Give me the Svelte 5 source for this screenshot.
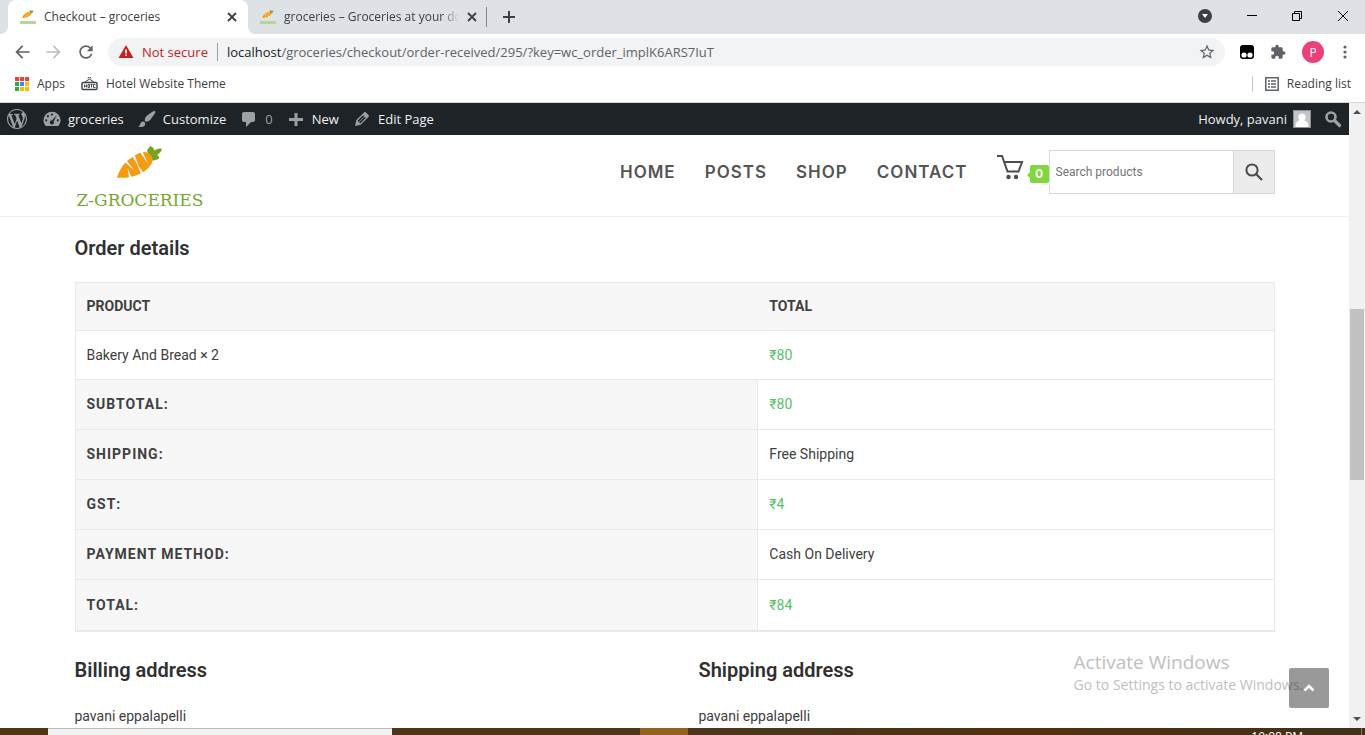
<script>
  const menu = ['Home', 'Posts', 'Shop', 'Contact'];
  const totals = [
    { label: 'Subtotal:', value: '₹80', price: true },
    { label: 'Shipping:', value: 'Free Shipping', price: false },
    { label: 'GST:', value: '₹4', price: true },
    { label: 'Payment method:', value: 'Cash On Delivery', price: false },
    { label: 'Total:', value: '₹84', price: true }
  ];
  const addresses = [
    { title: 'Billing address', name: 'pavani eppalapelli' },
    { title: 'Shipping address', name: 'pavani eppalapelli' }
  ];
  const dots = ['#ea4335', '#ea4335', '#ea4335', '#34a853', '#4285f4', '#fbbc05', '#34a853', '#fbbc05', '#fbbc05'];
</script>

{#snippet carrot(size)}
  <svg width={size} height={size * 0.72} viewBox="0 0 50 36" aria-hidden="true">
    <path fill="#74a51f" d="M34 8c-3-3-1-5 2-8 2 1 4 3 4 5 3-2 5-3 8-2-1 3-3 5-5 6 1 1 2 2 2 4-3 2-6 2-8 2z" />
    <path fill="#f39c12" d="M1 33C4 23 9 17 15 13 22 8 28 5 33 7c5 2 7 8 3 13-6 9-20 14-35 13z" />
    <path fill="#fff" d="M9 16.500l10 9-8-10.500zM17 11l7 11-4.500-12.500zM25 6.500l8 11.500-5.500-12.500zM14 34l-2-11 4.500 10.500zM26 29l-4-10 6.500 8.500z" />
  </svg>
{/snippet}

{#snippet favicon()}
  <span class="favicon" aria-hidden="true">{@render carrot(12)}<i></i></span>
{/snippet}

{#snippet cross()}
  <svg width="10" height="10" viewBox="0 0 10 10" aria-hidden="true"><path d="M1 1l8 8M9 1L1 9" stroke="#3c4043" stroke-width="1.8" /></svg>
{/snippet}

<div class="screen">
  <header class="browser">
    <div class="tabs">
      <div class="tab active">
        {@render favicon()}
        <span class="tab-title">Checkout – groceries</span>
        <button class="plain" aria-label="Close tab">{@render cross()}</button>
      </div>
      <div class="tab">
        {@render favicon()}
        <span class="tab-title fade">groceries – Groceries at your door</span>
        <button class="plain" aria-label="Close tab">{@render cross()}</button>
      </div>
      <button class="plain new-tab" aria-label="New tab">
        <svg width="12" height="12" viewBox="0 0 12 12"><path d="M6 0v12M0 6h12" stroke="#3c4043" stroke-width="2" /></svg>
      </button>
      <div class="window-buttons">
        <button class="plain" aria-label="Search tabs">
          <svg width="14" height="14" viewBox="0 0 14 14"><circle cx="7" cy="7" r="7" fill="#3c4043" /><path d="M4 5h6l-3 4z" fill="#fff" /></svg>
        </button>
        <button class="plain" aria-label="Minimize">
          <svg width="10" height="10" viewBox="0 0 10 10"><path d="M0 4.500h10" stroke="#000" /></svg>
        </button>
        <button class="plain" aria-label="Restore">
          <svg width="10" height="10" viewBox="0 0 10 10"><path d="M.5 2.500h7v7h-7zM2.500 2.500v-2h7v7h-2" fill="none" stroke="#000" /></svg>
        </button>
        <button class="plain" aria-label="Close">
          <svg width="12" height="12" viewBox="0 0 12 12"><path d="M1 1l10 10M11 1L1 11" stroke="#000" /></svg>
        </button>
      </div>
    </div>

    <div class="toolbar">
      <button class="plain" aria-label="Back">
        <svg width="20" height="20" viewBox="0 0 24 24"><path fill="#5f6368" d="M21 11H7.830l5.590-5.590L12 4l-8 8 8 8 1.410-1.410L7.830 13H21v-2z" /></svg>
      </button>
      <button class="plain" aria-label="Forward">
        <svg width="20" height="20" viewBox="0 0 24 24"><path fill="#babcbe" d="M3 11h13.170l-5.590-5.590L12 4l8 8-8 8-1.410-1.410L16.170 13H3v-2z" /></svg>
      </button>
      <button class="plain" aria-label="Reload">
        <svg width="20" height="20" viewBox="0 0 24 24"><path fill="#5f6368" d="M17.650 6.350C16.200 4.900 14.210 4 12 4c-4.420 0-7.990 3.580-7.990 8s3.570 8 7.990 8c3.730 0 6.840-2.550 7.730-6h-2.080c-.82 2.330-3.040 4-5.650 4-3.310 0-6-2.690-6-6s2.690-6 6-6c1.660 0 3.140.69 4.220 1.780L13 11h7V4l-2.350 2.350z" /></svg>
      </button>
      <form class="omnibox">
        <svg width="16" height="14" viewBox="0 0 16 14" aria-hidden="true"><path d="M8 0l7.500 13H.5z" fill="#c5221f" /><path d="M7.200 4.500h1.600v4H7.200zM7.200 9.500h1.600V11H7.200z" fill="#fff" /></svg>
        <span class="insecure">Not secure</span>
        <label for="address">localhost</label>
        <input id="address" value="/groceries/checkout/order-received/295/?key=wc_order_implK6ARS7IuT" />
        <button class="plain" type="button" aria-label="Bookmark this page">
          <svg width="18" height="18" viewBox="0 0 24 24"><path fill="#5f6368" d="M22 9.240l-7.190-.62L12 2 9.190 8.630 2 9.240l5.460 4.730L5.820 21 12 17.270 18.180 21l-1.630-7.030L22 9.240zM12 15.400l-3.760 2.270 1-4.280-3.320-2.880 4.380-.38L12 6.100l1.710 4.040 4.380.38-3.320 2.880 1 4.280L12 15.400z" /></svg>
        </button>
      </form>
      <div class="extensions">
        <button class="plain" aria-label="Extension">
          <svg width="14" height="14" viewBox="0 0 14 14"><rect width="14" height="14" rx="3" /><circle cx="4" cy="10" r="2.600" fill="#fff" /><circle cx="10" cy="10" r="2.600" fill="#fff" /></svg>
        </button>
        <button class="plain" aria-label="Extensions">
          <svg width="16" height="16" viewBox="0 0 24 24"><path fill="#5f6368" d="M20.500 11H19V7c0-1.100-.9-2-2-2h-4V3.500C13 2.120 11.880 1 10.500 1S8 2.120 8 3.500V5H4c-1.100 0-1.990.9-1.990 2v3.800H3.500c1.490 0 2.700 1.210 2.700 2.700s-1.210 2.700-2.700 2.700H2V20c0 1.100.9 2 2 2h3.800v-1.500c0-1.490 1.210-2.700 2.700-2.700 1.490 0 2.700 1.210 2.700 2.700V22H17c1.100 0 2-.9 2-2v-4h1.500c1.380 0 2.500-1.120 2.500-2.500S21.880 11 20.500 11z" /></svg>
        </button>
        <button class="plain profile">P</button>
        <button class="plain" aria-label="Menu">
          <svg width="4" height="14" viewBox="0 0 4 14" fill="#5f6368"><circle cx="2" cy="2" r="1.600" /><circle cx="2" cy="7" r="1.600" /><circle cx="2" cy="12" r="1.600" /></svg>
        </button>
      </div>
    </div>

    <nav class="bookmarks" aria-label="Bookmarks">
      <a href="#apps">
        <svg width="14" height="14" viewBox="0 0 14 14" aria-hidden="true">
          {#each dots as fill, i}
            <rect x={(i % 3) * 5} y={Math.floor(i / 3) * 5} width="4" height="4" {fill} />
          {/each}
        </svg>
        Apps
      </a>
      <a href="#hotel">
        <svg width="17" height="14" viewBox="0 0 17 14" fill="none" stroke="#3c4043" aria-hidden="true">
          <path d="M3.500 5.500l5-3.500 5 3.500M7 1.500a1.500 1.500 0 0 1 3 0" />
          <rect x="1" y="5.500" width="15" height="7" rx="1" stroke-width="1.400" />
          <path d="M3.500 7.500v3M5.500 7.500v3M3.500 9h2M7 7.500h1.500v3H7zM9.500 7.500h2M10.500 7.500v3M14.500 7.500h-2v3h2" stroke-width=".9" />
        </svg>
        Hotel Website Theme
      </a>
      <a class="reading" href="#reading">
        <svg width="14" height="14" viewBox="0 0 14 14" aria-hidden="true"><path d="M.8.8h12.400v12.400H.8z" fill="none" stroke="#5f6368" stroke-width="1.500" /><path d="M3 4h2M6 4h5M3 7h2M6 7h5M3 10h2M6 10h5" stroke="#5f6368" stroke-width="1.500" /></svg>
        Reading list
      </a>
    </nav>
  </header>

  <div class="viewport">
    <div class="page">
      <nav class="admin" aria-label="Site toolbar">
        <a class="wp" href="#wp" aria-label="WordPress">
          <svg width="20" height="20" viewBox="0 0 20 20"><path d="M20 10c0-5.510-4.490-10-10-10C4.480 0 0 4.490 0 10c0 5.520 4.480 10 10 10 5.510 0 10-4.480 10-10zM7.780 15.370L4.370 6.220c.55-.02 1.170-.08 1.170-.08.5-.06.44-1.130-.06-1.110 0 0-1.450.11-2.370.11-.18 0-.37 0-.58-.01C4.120 2.690 6.870 1.110 10 1.110c2.330 0 4.450.87 6.050 2.340-.68-.11-1.650.39-1.650 1.580 0 .74.45 1.360.9 2.100.35.61.55 1.360.55 2.460 0 1.490-1.400 5-1.400 5l-3.030-8.370c.54-.02.82-.17.82-.17.5-.05.44-1.250-.06-1.220 0 0-1.440.12-2.380.12-.87 0-2.330-.12-2.330-.12-.5-.03-.56 1.200-.06 1.220l.92.08 1.260 3.410zM17.410 10c.24-.64.74-1.870.43-4.250.7 1.290 1.050 2.710 1.050 4.250 0 3.290-1.730 6.240-4.400 7.780.97-2.590 1.940-5.200 2.920-7.780zM6.100 18.090C3.120 16.650 1.110 13.530 1.110 10c0-1.300.23-2.480.72-3.590C3.250 10.300 4.670 14.200 6.100 18.090zm4.030-6.630l2.580 6.980c-.86.29-1.760.45-2.710.45-.79 0-1.570-.11-2.290-.33.81-2.380 1.620-4.740 2.420-7.100z" /></svg>
        </a>
        <a href="#site">
          <svg width="20" height="20" viewBox="0 0 20 20"><path d="M3.800 17h12.400c1.400-1.600 2.300-3.500 2.300-5.800a8.500 8.500 0 0 0-17 0c0 2.300.9 4.200 2.300 5.800z" /><g fill="#1d2327"><circle cx="10" cy="5.500" r="1.100" /><circle cx="5.900" cy="7.200" r="1.100" /><circle cx="4.200" cy="11.300" r="1.100" /><circle cx="15.800" cy="11.300" r="1.100" /><path d="M14.800 6.200l-3.200 6.200a2 2 0 1 1-1.800-1z" /></g></svg>
          groceries
        </a>
        <a href="#customize">
          <svg width="20" height="20" viewBox="0 0 20 20"><path d="M18.330 3.570s.27-.8-.31-1.360c-.53-.52-1.220-.24-1.220-.24-.61.3-5.760 3.470-7.670 5.570-.86.96-2.060 3.790-1.090 4.820.92.98 3.960-.17 4.790-1 2.060-2.060 5.210-7.170 5.500-7.790zM1.400 17.650c2.370-1.560 1.460-3.410 3.230-4.640.93-.65 2.220-.62 3.080.29.63.67.8 2.570-.16 3.460-1.570 1.450-4 1.550-6.150.89z" /></svg>
          Customize
        </a>
        <a class="dim" href="#comments">
          <svg width="20" height="20" viewBox="0 0 20 20"><path d="M5 3h9c1.100 0 2 .9 2 2v6c0 1.100-.9 2-2 2h-2l-5 5v-5H5c-1.100 0-2-.9-2-2V5c0-1.100.9-2 2-2z" /></svg>
          0
        </a>
        <a href="#new">
          <svg width="20" height="20" viewBox="0 0 20 20"><path d="M8.500 4h3v5H17v3h-5.500v5h-3v-5H3V9h5.500z" /></svg>
          New
        </a>
        <a href="#edit">
          <svg width="20" height="20" viewBox="0 0 20 20"><path d="M13.890 3.390l2.710 2.720c.46.46.42 1.240.03 1.640l-8.010 8.020-5.560 1.160 1.160-5.580s7.600-7.630 7.990-8.030c.39-.39 1.220-.39 1.680.07zm-2.730 2.790l-5.590 5.610 1.110 1.110 5.540-5.650zm-2.970 8.230l5.580-5.600-1.070-1.080-5.590 5.600z" /></svg>
          Edit Page
        </a>
        <a class="howdy" href="#profile">
          Howdy, pavani
          <svg width="18" height="18" viewBox="0 0 18 18"><path fill="#8c8f94" d="M0 0h18v18H0z" /><path fill="#c3c4c7" d="M1 1h16v16H1z" /><path fill="#fff" d="M9 3.500a3.700 3.700 0 0 1 2.300 6.700C14 11 15.500 13 15.500 17h-13c0-4 1.500-6 4.200-6.800A3.700 3.700 0 0 1 9 3.500z" /></svg>
        </a>
        <a href="#find" aria-label="Search">
          <svg width="18" height="18" viewBox="0 0 18 18"><circle cx="7" cy="7" r="4.500" fill="none" stroke="#9ca1a6" stroke-width="2.600" /><path d="M10.500 10.500l5 5" stroke="#9ca1a6" stroke-width="3.200" stroke-linecap="round" /></svg>
        </a>
      </nav>

      <div class="site-header">
        <div class="container bar">
          <a class="logo" href="#home">
            {@render carrot(48)}
            <span>Z-GROCERIES</span>
          </a>
          <nav class="menu" aria-label="Main">
            {#each menu as item}
              <a href="#{item.toLowerCase()}">{item}</a>
            {/each}
          </nav>
          <a class="cart" href="#cart" aria-label="Cart">
            <svg width="27" height="27" viewBox="0 0 27 27" fill="none" stroke="#4c4c4c" stroke-width="2"><path d="M0 2h5l5.500 15.500h11L25 8H7" /><circle cx="11.500" cy="23" r="2.200" fill="#4c4c4c" stroke="none" /><circle cx="19" cy="23" r="2.200" fill="#4c4c4c" stroke="none" /></svg>
            <span class="badge">0</span>
          </a>
          <form class="search">
            <input type="search" placeholder="Search products" aria-label="Search products" />
            <button type="button" aria-label="Search">
              <svg width="18" height="18" viewBox="0 0 18 18" fill="none" stroke="#4c4c4c"><circle cx="7" cy="7" r="5.600" stroke-width="2" /><path d="M11 11l6 6" stroke-width="2.200" /></svg>
            </button>
          </form>
        </div>
      </div>

      <main class="container">
        <h2>Order details</h2>
        <table>
          <thead>
            <tr><th scope="col">Product</th><th scope="col">Total</th></tr>
          </thead>
          <tbody>
            <tr><td>Bakery And Bread × 2</td><td class="price">₹80</td></tr>
          </tbody>
          <tfoot>
            {#each totals as row}
              <tr><th scope="row">{row.label}</th><td class:price={row.price}>{row.value}</td></tr>
            {/each}
          </tfoot>
        </table>
        <div class="addresses">
          {#each addresses as a}
            <section>
              <h2>{a.title}</h2>
              <address>{a.name}</address>
            </section>
          {/each}
        </div>
      </main>

      <div class="watermark"><strong>Activate Windows</strong><span>Go to Settings to activate Windows.</span></div>
      <button class="to-top" aria-label="Back to top">
        <svg width="12" height="8" viewBox="0 0 12 8"><path d="M1.500 6.500L6 2l4.500 4.500" fill="none" stroke="#fff" stroke-width="2.600" /></svg>
      </button>
    </div>
    <div class="scrollbar" aria-hidden="true">
      <svg width="8" height="5" viewBox="0 0 8 5"><path d="M0 5l4-4 4 4z" fill="#505050" /></svg>
      <div class="track"><i></i></div>
      <svg width="8" height="5" viewBox="0 0 8 5"><path d="M0 0l4 4 4-4z" fill="#505050" /></svg>
    </div>
  </div>

  <footer class="taskbar">
    <div class="task-search"></div>
    <div class="task-app"></div>
    <time>10:08 PM</time>
    <div class="show-desktop"></div>
  </footer>
</div>

<style>
  :global(body) { margin: 0; }
  * { box-sizing: border-box; }
  a { color: inherit; text-decoration: none; }
  svg { display: block; flex: none; }
  .plain { display: flex; align-items: center; justify-content: center; padding: 0; border: 0; background: none; font: inherit; }
  .screen { display: flex; flex-direction: column; height: 100vh; overflow: hidden; background: #fff; color: #404040; font-family: Roboto, sans-serif; font-size: 14px; }

  .browser { flex: none; border-bottom: 1px solid #d5d7da; font-family: "Open Sans", "Noto Sans", sans-serif; font-size: 12px; color: #3c4043; }
  .tabs { display: flex; align-items: center; height: 34px; padding-left: 8px; background: #dee1e6; }
  .tab { position: relative; display: flex; align-items: center; gap: 8px; width: 240px; height: 34px; padding: 0 11px 0 12px; }
  .tab:not(.active)::after { content: ""; position: absolute; right: 1px; top: 7px; width: 1px; height: 20px; background: #85888c; }
  .tab.active { background: #fff; border-radius: 8px 8px 0 0; }
  .tab.active::before, .tab.active::after { content: ""; position: absolute; bottom: 0; width: 8px; height: 8px; }
  .tab.active::before { right: 100%; background: radial-gradient(circle at 0 0, transparent 8px, #fff 8px); }
  .tab.active::after { left: 100%; background: radial-gradient(circle at 100% 0, transparent 8px, #fff 8px); }
  .tab-title { flex: 1; overflow: hidden; white-space: nowrap; line-height: 18px; }
  .fade { mask-image: linear-gradient(to right, #000 90%, transparent); }
  .favicon { display: flex; flex-direction: column; align-items: center; gap: 2px; width: 16px; }
  .favicon i { width: 16px; height: 3px; background: #b9d49b; }
  .new-tab { margin-left: 15px; }
  .window-buttons { display: flex; gap: 35px; align-items: center; margin-left: auto; padding-right: 16px; padding-bottom: 2px; }

  .toolbar { display: flex; align-items: center; gap: 12px; height: 36px; padding: 0 18px 0 12px; }
  .omnibox { flex: 1; display: flex; align-items: center; height: 28px; padding: 0 9px 0 10px; border-radius: 14px; background: #f1f3f4; font-size: 13px; line-height: 18px; }
  .insecure { margin-left: 8px; padding-right: 9px; margin-right: 9px; border-right: 1px solid #9aa0a6; color: #c5221f; white-space: nowrap; }
  .omnibox label { color: #202124; }
  .omnibox input { flex: 1; min-width: 0; padding: 0; border: 0; background: none; outline: 0; color: #5f6368; font: inherit; }
  .extensions { display: flex; align-items: center; gap: 16px; padding-left: 3px; }
  .profile { width: 22px; height: 22px; border-radius: 50%; background: #ec407a; color: #fff; font-size: 12px; }
  .extensions button:last-child { padding-left: 3px; }

  .bookmarks { display: flex; align-items: center; gap: 16px; height: 32px; padding: 0 14px 4px 15px; }
  .bookmarks a { display: flex; align-items: center; gap: 8px; line-height: 16px; }
  .bookmarks .reading { margin-left: auto; padding-left: 12px; border-left: 1px solid #c4c7cb; }

  .viewport { flex: 1; min-height: 0; display: flex; }
  .page { position: relative; flex: 1; min-width: 0; overflow: hidden; }
  .container { max-width: 1200px; margin: 0 auto; }

  .admin { display: flex; align-items: center; gap: 13px; height: 32px; padding: 0 7px; background: #1d2327; color: #f0f0f1; fill: #9ca1a6; font-family: "Open Sans", "Noto Sans", sans-serif; font-size: 13px; }
  .admin a { display: flex; align-items: center; gap: 6px; }
  .admin .wp { margin-right: 2px; }
  .admin .dim { color: #9ca1a6; }
  .admin .howdy { margin-left: auto; }

  .site-header { border-bottom: 1px solid #efefef; }
  .bar { display: flex; align-items: center; height: 81px; }
  .logo { display: flex; flex-direction: column; align-items: center; gap: 10px; padding: 5px 0 0 2px; color: #74a832; font-family: "DejaVu Serif", serif; font-size: 17px; line-height: 20px; }
  .menu { display: flex; gap: 29px; margin-left: auto; margin-right: 29px; padding-bottom: 8px; color: #555; font-family: Inter, sans-serif; font-size: 17px; font-weight: 600; letter-spacing: 1px; text-transform: uppercase; }
  .cart { display: flex; align-items: center; gap: 6px; padding-bottom: 16px; }
  .badge { position: relative; top: 6px; width: 19px; border-radius: 2px; background: #80d83c; color: #fff; font-family: Inter, sans-serif; font-size: 12px; font-weight: 700; line-height: 18px; text-align: center; }
  .badge::before { content: ""; position: absolute; right: 100%; top: 7px; border: 3px solid transparent; border-left: 0; border-right-color: #80d83c; }
  .search { display: flex; width: 226px; height: 44px; margin-bottom: 8px; border: 1px solid #d9d9d9; }
  .search input { flex: 1; min-width: 0; padding: 0 6px; border: 0; border-right: 1px solid #d9d9d9; background: #fff; font: 12px Roboto, sans-serif; outline: 0; }
  .search input::placeholder { color: #757575; }
  .search button { display: flex; align-items: center; justify-content: center; width: 40px; padding: 0; border: 0; background: #ececec; }

  h2 { margin: 0; color: #303030; font-size: 20px; font-weight: 600; line-height: 26px; }
  main h2 { padding: 18px 0 21px; }
  table { width: 100%; border-collapse: separate; border-spacing: 0; border: 1px solid #e9e9e9; border-top: 0; line-height: 24px; }
  th, td { height: 49px; padding: 0 11px; border-top: 1px solid #e9e9e9; text-align: left; }
  th { background: #f7f7f7; color: #404040; font-weight: 700; text-transform: uppercase; }
  tr > :first-child { width: 57%; }
  thead th { height: 48px; padding-bottom: 1px; }
  tfoot th, tfoot td { height: 50px; padding-bottom: 1px; }
  tfoot th { border-right: 1px solid #e9e9e9; letter-spacing: 1px; }
  tfoot tr:last-child > * { height: 52px; border-bottom: 1px solid #e9e9e9; }
  .price { color: #57bf6d; }
  .addresses { display: grid; grid-template-columns: 1fr 1fr; gap: 48px; padding-top: 7px; }
  .addresses h2 { padding-bottom: 20px; }
  address { font-style: normal; line-height: 26px; }

  .watermark { position: absolute; right: 46px; bottom: 32px; display: flex; flex-direction: column; color: #c0c0c0; font: 14px/22px "Open Sans", "Noto Sans", sans-serif; }
  .watermark strong { font-size: 19px; font-weight: 400; line-height: 24px; }
  .to-top { position: absolute; right: 20px; bottom: 20px; display: flex; align-items: center; justify-content: center; width: 40px; height: 40px; padding: 0; border: 0; border-radius: 2px; background: rgb(0 0 0 / 40%); }

  .scrollbar { display: flex; flex-direction: column; align-items: center; width: 16px; padding: 6px 0; background: #f1f1f1; }
  .track { flex: 1; width: 14px; padding-top: 195px; }
  .track i { display: block; height: 171px; background: #c1c1c1; }

  .taskbar { flex: none; display: flex; height: 7px; padding-left: 48px; overflow: hidden; background: linear-gradient(to right, #4e3512, #49351a 60%, #52310f 75%, #40301a); }
  .task-search { width: 344px; border-top: 1px solid #b9b9b9; background: #f4f2f0; }
  .task-app { width: 48px; margin-left: 248px; background: #93601f; }
  time { margin-left: auto; padding-top: 3px; color: #fff; font: 12px/12px "Open Sans", sans-serif; }
  .show-desktop { width: 4px; margin-left: 58px; border-left: 1px solid #8a7a62; }
</style>
